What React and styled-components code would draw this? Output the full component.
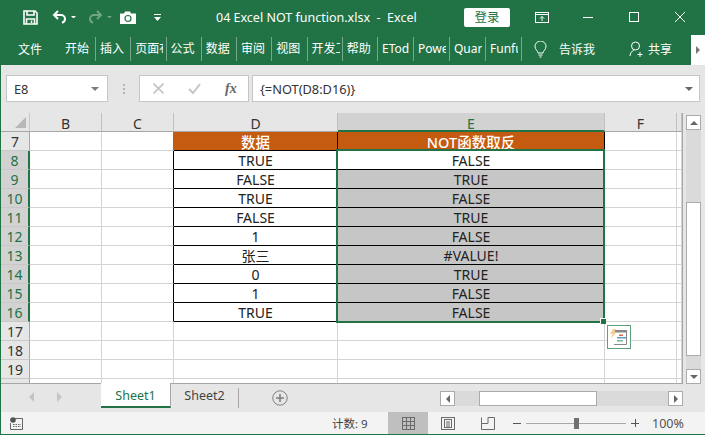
import React from 'react'
import styled, { createGlobalStyle } from 'styled-components'

const GlobalStyle = createGlobalStyle`
  html, body {
    margin: 0;
    padding: 0;
    background: #e6e6e6;
  }
  body {
    font-family: "Noto Sans", "Noto Sans CJK SC", sans-serif;
  }
`

const GREEN = '#217346'

const Window = styled.div`
  box-sizing: border-box;
  width: 705px;
  height: 435px;
  border: 1px solid ${GREEN};
  border-right: 0;
  display: flex;
  flex-direction: column;
  overflow: hidden;
  background: #e6e6e6;
`

const TitleBar = styled.div`
  height: 32px;
  flex: none;
  background: ${GREEN};
  display: flex;
  align-items: center;
  color: #fff;
`

const QuickAccess = styled.div`
  display: flex;
  align-items: center;
  width: 215px;
  padding-left: 22px;
  box-sizing: border-box;
`

const QuickButton = styled.span`
  display: flex;
  align-items: center;
  margin-right: ${(p) => p.$gap}px;
  opacity: ${(p) => (p.$muted ? 0.35 : 1)};
`

const DocTitle = styled.div`
  width: 248px;
  font-size: 12.5px;
  white-space: pre;
`

const LoginButton = styled.div`
  width: 46px;
  height: 19px;
  margin-right: 9px;
  background: #fff;
  color: ${GREEN};
  border-radius: 2px;
  font-size: 12.5px;
  line-height: 19px;
  text-align: center;
`

const WinButton = styled.span`
  display: flex;
  justify-content: center;
  width: 46px;
`

const TabRow = styled.div`
  height: 32px;
  flex: none;
  background: ${GREEN};
  display: flex;
  align-items: center;
  color: #fff;
  font-size: 12px;
  padding-left: 17px;
  position: relative;
`

const FileTab = styled.div`
  width: 47px;
  font-size: 12px;
`

const Tab = styled.div`
  box-sizing: border-box;
  width: ${(p) => p.$w}px;
  height: 24px;
  line-height: 24px;
  flex: none;
  padding-left: ${(p) => (p.$first ? 0 : 4)}px;
  border-right: 1px solid #76a98b;
`

const TabLabel = styled.span`
  display: block;
  width: 28px;
  overflow: hidden;
  white-space: nowrap;
`

const TellMe = styled.div`
  display: flex;
  align-items: center;
  margin-left: 12px;
  width: 95px;
  gap: 12px;
`

const Share = styled.div`
  display: flex;
  align-items: center;
  gap: 3px;
`

const Collapse = styled.div`
  position: absolute;
  right: 0;
  top: 2px;
  width: 14px;
  height: 30px;
  background: #fff;
  display: flex;
  align-items: center;
  justify-content: center;
`

const FormulaBar = styled.div`
  height: 48px;
  flex: none;
  display: flex;
  padding: 10px 0 0 5px;
  box-sizing: border-box;
  align-items: flex-start;
`

const InputBox = styled.div`
  box-sizing: border-box;
  height: 27px;
  background: #fff;
  border: 1px solid #c6c6c6;
  display: flex;
  align-items: center;
  font-size: 12.8px;
  color: #333;
`

const NameBox = styled(InputBox)`
  width: 102px;
  padding: 0 8px 0 7px;
  justify-content: space-between;
`

const Grip = styled.div`
  width: 31px;
  display: flex;
  flex-direction: column;
  align-items: center;
  gap: 2px;
  padding-top: 9px;
  span {
    width: 2px;
    height: 2px;
    background: #b4b4b4;
  }
`

const FxBox = styled(InputBox)`
  width: 110px;
  margin-right: 3px;
  padding-left: 13px;
  gap: 24px;
`

const FxLabel = styled.i`
  font-family: "Liberation Serif", serif;
  font-size: 14px;
  font-weight: bold;
  color: #666;
`

const FormulaInput = styled(InputBox)`
  width: 448px;
  padding: 0 6px 0 7px;
  justify-content: space-between;
`

const Main = styled.div`
  height: 271px;
  flex: none;
  display: flex;
`

const Sheet = styled.div`
  position: relative;
  width: 682px;
  flex: none;
  overflow: hidden;
  background: #fff;
  border-right: 1px solid #a6a6a6;
  border-bottom: 1px solid #a6a6a6;
  box-sizing: border-box;
`

const HeaderRow = styled.div`
  display: flex;
  height: 19px;
  background: #e6e6e6;
`

const Corner = styled.div`
  box-sizing: border-box;
  width: 29px;
  flex: none;
  height: 19px;
  border-right: 1px solid #c8c8c8;
  border-bottom: 1px solid #a6a6a6;
  position: relative;
  &::after {
    content: '';
    position: absolute;
    right: 3px;
    bottom: 3px;
    border-style: solid;
    border-width: 0 0 11px 11px;
    border-color: transparent transparent #b8b8b8 transparent;
  }
`

const ColHead = styled.div`
  box-sizing: border-box;
  width: ${(p) => p.$w}px;
  flex: none;
  height: 19px;
  line-height: 21px;
  text-align: center;
  font-size: 14px;
  color: ${(p) => (p.$on ? GREEN : '#333')};
  background: ${(p) => (p.$on ? '#d2d2d2' : '#e6e6e6')};
  border-right: 1px solid #c0c0c0;
  border-bottom: ${(p) => (p.$on ? `2px solid ${GREEN}` : '1px solid #a6a6a6')};
`

const Row = styled.div`
  display: flex;
  height: 19px;
`

const RowHead = styled.div`
  box-sizing: border-box;
  width: 29px;
  flex: none;
  height: 19px;
  line-height: 20px;
  text-align: center;
  font-size: 14px;
  color: ${(p) => (p.$on ? GREEN : '#333')};
  background: ${(p) => (p.$on ? '#d2d2d2' : '#e6e6e6')};
  border-right: ${(p) => (p.$on ? `2px solid ${GREEN}` : '1px solid #a6a6a6')};
  border-bottom: 1px solid #c8c8c8;
`

const Cell = styled.div`
  box-sizing: border-box;
  width: ${(p) => p.$w}px;
  flex: none;
  height: 19px;
  line-height: 20px;
  text-align: center;
  font-size: 14px;
  color: #222;
  overflow: hidden;
  white-space: nowrap;
  border-right: 1px solid ${(p) => p.$edge || '#d4d4d4'};
  border-bottom: 1px solid #d4d4d4;
`

const DataCell = styled(Cell)`
  background: ${(p) => (p.$shade ? '#c6c6c6' : '#fff')};
  border-right-color: #000;
  border-bottom-color: #000;
`

const TitleCell = styled(Cell)`
  background: #c55a11;
  color: #fff;
  font-weight: 500;
  font-size: 14.5px;
  line-height: 20px;
  border-right-color: #000;
  border-bottom-color: #000;
`

const Selection = styled.div`
  position: absolute;
  left: 335px;
  top: 36px;
  width: 269px;
  height: 174px;
  box-sizing: border-box;
  border: 2px solid ${GREEN};
  pointer-events: none;
`

const FillHandle = styled.div`
  position: absolute;
  right: -3px;
  bottom: -3px;
  width: 6px;
  height: 6px;
  box-sizing: border-box;
  background: ${GREEN};
  border-top: 1px solid #fff;
  border-left: 1px solid #fff;
`

const QuickAnalysis = styled.div`
  position: absolute;
  left: 606px;
  top: 212px;
  width: 24px;
  height: 24px;
  box-sizing: border-box;
  background: #fff;
  border: 1px solid #5f9f7c;
  display: flex;
  align-items: center;
  justify-content: center;
`

const VScroll = styled.div`
  flex: 1;
  display: flex;
  flex-direction: column;
  padding: 2px 4px 0 3px;
  background: #e6e6e6;
`

const ScrollBtn = styled.div`
  box-sizing: border-box;
  width: 15px;
  height: 15px;
  flex: none;
  background: #fff;
  border: 1px solid #ababab;
  display: flex;
  align-items: center;
  justify-content: center;
`

const VTrack = styled.div`
  flex: 1;
  background: #dadada;
  padding-top: 72px;
  padding-bottom: 13px;
  display: flex;
`

const Thumb = styled.div`
  box-sizing: border-box;
  flex: 1;
  background: #fff;
  border: 1px solid #ababab;
`

const TabBar = styled.div`
  height: 28px;
  flex: none;
  display: flex;
  background: #e6e6e6;
`

const TabNav = styled.div`
  width: 100px;
  flex: none;
  display: flex;
  align-items: center;
  gap: 23px;
  padding: 0 0 2px 28px;
  box-sizing: border-box;
`

const SheetTab = styled.div`
  box-sizing: border-box;
  position: relative;
  width: ${(p) => p.$w}px;
  flex: none;
  height: ${(p) => (p.$on ? 25 : 20)}px;
  margin-top: ${(p) => (p.$on ? -1 : 4)}px;
  background: ${(p) => (p.$on ? '#fff' : 'transparent')};
  color: ${(p) => (p.$on ? GREEN : '#444')};
  border-bottom: ${(p) => (p.$on ? `2px solid ${GREEN}` : '0')};
  border-right: 1px solid #a6a6a6;
  font-size: 12.5px;
  line-height: ${(p) => (p.$on ? 25 : 16)}px;
  text-align: center;
`

const AddSheet = styled.div`
  width: 201px;
  flex: none;
  display: flex;
  padding: 6px 0 0 33px;
  box-sizing: border-box;
`

const HScroll = styled.div`
  display: flex;
  height: 15px;
  margin-top: 7px;
  width: 243px;
`

const HTrack = styled.div`
  flex: 1;
  background: #dadada;
  padding: 0 71px 0 24px;
  display: flex;
`

const StatusBar = styled.div`
  height: 22px;
  flex: none;
  background: #f3f3f3;
  display: flex;
  align-items: center;
  font-size: 11.5px;
  color: #444;
`

const Macro = styled.div`
  width: 331px;
  padding-left: 9px;
  box-sizing: border-box;
  display: flex;
`

const Count = styled.div`
  width: 56px;
`

const ViewButton = styled.div`
  width: 40px;
  height: 22px;
  display: flex;
  align-items: center;
  justify-content: center;
  background: ${(p) => (p.$on ? '#bfbfbf' : 'transparent')};
`

const Zoom = styled.div`
  display: flex;
  align-items: center;
  margin-left: 5px;
`

const ZoomTrack = styled.div`
  position: relative;
  width: 100px;
  height: 1px;
  background: #a8a8a8;
  margin: 0 5px;
  &::after {
    content: '';
    position: absolute;
    left: 48px;
    top: -5px;
    width: 5px;
    height: 11px;
    background: #707070;
  }
`

const ZoomLabel = styled.div`
  margin-left: 13px;
  font-size: 12.5px;
  color: #555;
`

const tabs = [
  ['开始', 31],
  ['插入', 35.25],
  ['页面布', 35.25],
  ['公式', 35.25],
  ['数据', 35.25],
  ['审阅', 35.25],
  ['视图', 35.25],
  ['开发工', 35.25],
  ['帮助', 35.25],
  ['ETod', 36],
  ['Powe', 36],
  ['Quar', 36],
  ['Funfu', 36],
]

const dataD = ['TRUE', 'FALSE', 'TRUE', 'FALSE', '1', '张三', '0', '1', 'TRUE']
const dataE = ['FALSE', 'TRUE', 'FALSE', 'TRUE', 'FALSE', '#VALUE!', 'TRUE', 'FALSE', 'FALSE']
const columns = [
  ['B', 72],
  ['C', 72],
  ['D', 164],
  ['E', 267],
  ['F', 72],
  ['', 5],
]

const Arrow = ({ dir = 'down', color = '#7a7a7a', size = 5 }) => {
  const pts = {
    down: `0,0 ${size * 2},0 ${size},${size}`,
    up: `0,${size} ${size * 2},${size} ${size},0`,
    left: `${size},0 ${size},${size * 2} 0,${size}`,
    right: `0,0 0,${size * 2} ${size},${size}`,
  }[dir]
  const vertical = dir === 'down' || dir === 'up'
  return (
    <svg width={vertical ? size * 2 : size} height={vertical ? size : size * 2}>
      <polygon points={pts} fill={color} />
    </svg>
  )
}

const SaveIcon = () => (
  <svg width="15" height="15" viewBox="0 0 15 15" fill="none" stroke="#fff" strokeWidth="1.6">
    <path d="M1 1h11l2 2v11H1z" />
    <path d="M4 1v4h7V1" />
    <path d="M3.5 14V9h8v5" />
    <path d="M8.5 10.5v2.5" strokeWidth="1.4" />
  </svg>
)

const UndoIcon = ({ flip }) => (
  <svg width="15" height="14" viewBox="0 0 15 14" fill="none" stroke="#fff" strokeWidth="2" style={flip ? { transform: 'scaleX(-1)' } : undefined}>
    <path d="M6 1L2 5l4 4" />
    <path d="M2.5 5H9a4 4 0 0 1 4 4 4 4 0 0 1-3 3.8" />
  </svg>
)

const CameraIcon = () => (
  <svg width="16" height="13" viewBox="0 0 16 13">
    <path d="M0 2.5h4l1-2h5l1 2h5V13H0z" fill="#fff" />
    <circle cx="8" cy="7.5" r="3" fill="none" stroke={GREEN} strokeWidth="1.2" />
  </svg>
)

const CustomizeIcon = () => (
  <svg width="7" height="7" viewBox="0 0 7 7" fill="#fff">
    <rect x="0" y="0" width="7" height="1" />
    <polygon points="0,3 7,3 3.5,7" />
  </svg>
)

const RibbonIcon = () => (
  <svg width="14" height="11" viewBox="0 0 14 11" fill="none" stroke="#fff">
    <rect x="0.5" y="0.5" width="13" height="10" />
    <path d="M0.5 2.5h13" />
    <path d="M7 9V4.5M5 6.5l2-2 2 2" />
  </svg>
)

const MinIcon = () => (
  <svg width="10" height="10" viewBox="0 0 10 10" stroke="#fff">
    <path d="M0 5.5h10" />
  </svg>
)

const MaxIcon = () => (
  <svg width="10" height="10" viewBox="0 0 10 10" fill="none" stroke="#fff">
    <rect x="0.5" y="0.5" width="9" height="9" />
  </svg>
)

const CloseIcon = () => (
  <svg width="10" height="10" viewBox="0 0 10 10" stroke="#fff">
    <path d="M0 0l10 10M10 0L0 10" />
  </svg>
)

const BulbIcon = () => (
  <svg width="13" height="17" viewBox="0 0 13 17" fill="none" stroke="#fff">
    <path d="M4 12c0-2-3-3.5-3-6.5a5.5 5.5 0 0 1 11 0c0 3-3 4.5-3 6.5z" />
    <path d="M4.5 14h4M5.5 16h2" />
  </svg>
)

const PersonIcon = () => (
  <svg width="16" height="16" viewBox="0 0 16 16" fill="none" stroke="#fff">
    <circle cx="6.5" cy="5" r="4" />
    <path d="M1 15c0-3 2-5 4-6M11 11v5M8.5 13.5h5" />
  </svg>
)

const CancelIcon = () => (
  <svg width="11" height="11" viewBox="0 0 11 11" stroke="#c4c4c4" strokeWidth="1.6">
    <path d="M0.5 0.5l10 10M10.5 0.5l-10 10" />
  </svg>
)

const CheckIcon = () => (
  <svg width="13" height="11" viewBox="0 0 13 11" fill="none" stroke="#c4c4c4" strokeWidth="2">
    <path d="M1 6l4 4 7-9" />
  </svg>
)

const PlusCircle = () => (
  <svg width="16" height="16" viewBox="0 0 16 16" fill="none" stroke="#7f7f7f">
    <circle cx="8" cy="8" r="7.2" />
    <path d="M8 4v8M4 8h8" strokeWidth="1.6" />
  </svg>
)

const MacroIcon = () => (
  <svg width="13" height="13" viewBox="0 0 13 13">
    <circle cx="3" cy="3" r="2.8" fill="#555" />
    <path d="M5 1.5h7.5v11H.5V6" fill="none" stroke="#666" />
    <path d="M3 7.5h8M3 9.5h8" stroke="#666" strokeDasharray="1.5 1" />
  </svg>
)

const NormalViewIcon = () => (
  <svg width="13" height="13" viewBox="0 0 13 13" fill="none" stroke="#6b6b6b">
    <rect x="0.5" y="0.5" width="12" height="12" />
    <path d="M4.5 0.5v12M8.5 0.5v12M0.5 4.5h12M0.5 8.5h12" />
  </svg>
)

const LayoutViewIcon = () => (
  <svg width="14" height="13" viewBox="0 0 14 13" fill="none" stroke="#6b6b6b">
    <rect x="0.5" y="0.5" width="13" height="12" />
    <rect x="3.5" y="2.5" width="7" height="8" />
    <path d="M5 5h4M5 7h4M5 9h4" />
  </svg>
)

const BreakViewIcon = () => (
  <svg width="14" height="13" viewBox="0 0 14 13" fill="none" stroke="#6b6b6b">
    <path d="M0.5 6.5V12.5H13.5V0.5H7V6.5H0.5V0.5" />
  </svg>
)

const FlashIcon = () => (
  <svg width="18" height="16" viewBox="0 0 18 16">
    <path d="M4 5V1.5h12.500v14H4" fill="none" stroke="#888" />
    <rect x="5" y="1" width="12" height="2.5" fill="#888" />
    <rect x="9" y="5.5" width="4" height="1.5" fill="#d9694c" />
    <rect x="7" y="8" width="9" height="1.5" fill="#5a9bd0" />
    <rect x="7" y="11" width="6" height="1.5" fill="#79b79a" />
    <polygon points="3,0 6,0 4,3.500 6,3.500 1,10 2.500,5 0,5" fill="#f6cf8e" />
  </svg>
)

const App = () => {
  return (
    <Window>
      <GlobalStyle />
      <TitleBar>
        <QuickAccess>
          <QuickButton $gap={14}><SaveIcon /></QuickButton>
          <QuickButton $gap={4}><UndoIcon /></QuickButton>
          <QuickButton $gap={12}><Arrow color="#fff" size={2.5} /></QuickButton>
          <QuickButton $gap={4} $muted><UndoIcon flip /></QuickButton>
          <QuickButton $gap={8} $muted><Arrow color="#fff" size={2.5} /></QuickButton>
          <QuickButton $gap={18}><CameraIcon /></QuickButton>
          <QuickButton $gap={0}><CustomizeIcon /></QuickButton>
        </QuickAccess>
        <DocTitle>{'04 Excel NOT function.xlsx  -  Excel'}</DocTitle>
        <LoginButton>登录</LoginButton>
        <WinButton><RibbonIcon /></WinButton>
        <WinButton><MinIcon /></WinButton>
        <WinButton><MaxIcon /></WinButton>
        <WinButton><CloseIcon /></WinButton>
      </TitleBar>

      <TabRow>
        <FileTab>文件</FileTab>
        {tabs.map(([t, w], i) => (
          <Tab key={t} $w={w} $first={i === 0}><TabLabel>{t}</TabLabel></Tab>
        ))}
        <TellMe><BulbIcon />告诉我</TellMe>
        <Share><PersonIcon />共享</Share>
        <Collapse><Arrow dir="right" color="#777" size={4} /></Collapse>
      </TabRow>

      <FormulaBar>
        <NameBox>E8<Arrow size={4} /></NameBox>
        <Grip><span /><span /><span /></Grip>
        <FxBox><CancelIcon /><CheckIcon /><FxLabel>fx</FxLabel></FxBox>
        <FormulaInput>{'{=NOT(D8:D16)}'}<Arrow size={4} color="#666" /></FormulaInput>
      </FormulaBar>

      <Main>
        <Sheet>
          <HeaderRow>
            <Corner />
            {columns.map(([name, w]) => (
              <ColHead key={name || 'G'} $w={w} $on={name === 'E'}>{name}</ColHead>
            ))}
          </HeaderRow>
          {Array.from({ length: 14 }, (_, i) => {
            const n = i + 7
            const idx = n - 8
            const inData = idx >= 0 && idx < 9
            return (
              <Row key={n}>
                <RowHead $on={inData}>{n}</RowHead>
                <Cell $w={72} />
                <Cell $w={72} $edge={n === 7 ? '#c55a11' : inData ? '#000' : undefined} />
                {n === 7 && <TitleCell $w={164}>数据</TitleCell>}
                {n === 7 && <TitleCell $w={267}>NOT函数取反</TitleCell>}
                {inData && <DataCell $w={164}>{dataD[idx]}</DataCell>}
                {inData && <DataCell $w={267} $shade={idx > 0}>{dataE[idx]}</DataCell>}
                {n > 16 && <Cell $w={164} />}
                {n > 16 && <Cell $w={267} />}
                <Cell $w={72} />
                <Cell $w={5} />
              </Row>
            )
          })}
          <Selection><FillHandle /></Selection>
          <QuickAnalysis><FlashIcon /></QuickAnalysis>
        </Sheet>
        <VScroll>
          <ScrollBtn><Arrow dir="up" size={4} color="#666" /></ScrollBtn>
          <VTrack><Thumb /></VTrack>
          <ScrollBtn><Arrow size={4} color="#666" /></ScrollBtn>
        </VScroll>
      </Main>

      <TabBar>
        <TabNav>
          <Arrow dir="left" size={5} color="#c4c4c4" />
          <Arrow dir="right" size={5} color="#c4c4c4" />
        </TabNav>
        <SheetTab $w={70} $on>Sheet1</SheetTab>
        <SheetTab $w={68}>Sheet2</SheetTab>
        <AddSheet><PlusCircle /></AddSheet>
        <HScroll>
          <ScrollBtn><Arrow dir="left" size={4} color="#666" /></ScrollBtn>
          <HTrack><Thumb /></HTrack>
          <ScrollBtn><Arrow dir="right" size={4} color="#666" /></ScrollBtn>
        </HScroll>
      </TabBar>

      <StatusBar>
        <Macro><MacroIcon /></Macro>
        <Count>计数: 9</Count>
        <ViewButton $on><NormalViewIcon /></ViewButton>
        <ViewButton><LayoutViewIcon /></ViewButton>
        <ViewButton><BreakViewIcon /></ViewButton>
        <Zoom>
          <svg width="8" height="8" stroke="#555"><path d="M0 4.5h8" /></svg>
          <ZoomTrack />
          <svg width="8" height="8" stroke="#555"><path d="M0 4.5h8M4.5 0v8" /></svg>
          <ZoomLabel>100%</ZoomLabel>
        </Zoom>
      </StatusBar>
    </Window>
  )
}

export default App
